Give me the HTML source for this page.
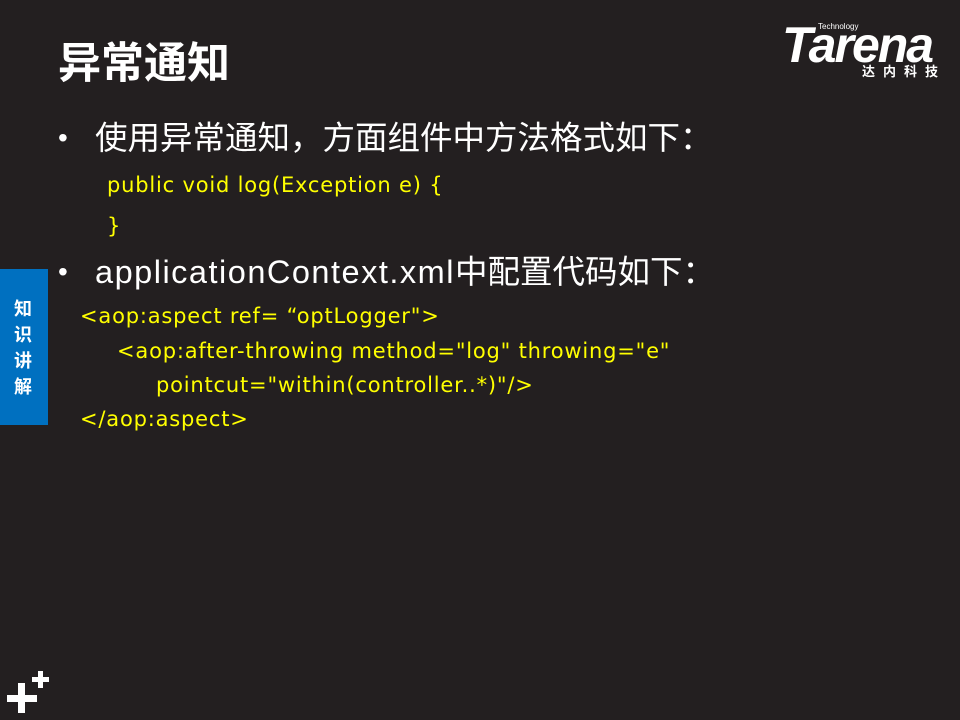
<!DOCTYPE html>
<html><head><meta charset="utf-8"><style>
body{margin:0;width:960px;height:720px;background:#231f20;position:relative;overflow:hidden;font-family:"Liberation Sans","Noto Sans CJK SC",sans-serif;color:#fff}
.a{position:absolute;white-space:nowrap}
.y{color:#ffff00;font-family:"DejaVu Sans",sans-serif;font-size:21px;line-height:30px;letter-spacing:0.8px}
</style></head><body>
<div class="a" style="left:58px;top:38px;font-size:43px;font-weight:bold;line-height:52px">异常通知</div>
<div class="a" style="left:782px;top:20px;font-size:50px;font-weight:bold;font-style:italic;letter-spacing:-2px;line-height:50px">Tarena</div>
<div class="a" style="left:818px;top:22px;font-size:8px;line-height:10px">Technology</div>
<div class="a" style="left:862px;top:64px;font-size:13px;font-weight:bold;letter-spacing:8px;line-height:16px">达内科技</div>
<div class="a" style="left:0;top:269px;width:48px;height:156px;background:#0070c0"></div>
<div class="a" style="left:14px;top:296px;font-size:18px;font-weight:bold;line-height:26px;width:20px;white-space:normal">知识讲解</div>
<div class="a" style="left:58px;top:118px;font-size:28px;line-height:40px">•</div>
<div class="a" style="left:95px;top:117px;font-size:32.5px;line-height:42px">使用异常通知，方面组件中方法格式如下：</div>
<div class="a y" style="left:107px;top:170px">public void log(Exception e) {</div>
<div class="a y" style="left:107px;top:211px">}</div>
<div class="a" style="left:58px;top:252px;font-size:28px;line-height:40px">•</div>
<div class="a" style="left:95px;top:251px;font-size:32.5px;line-height:42px"><span style="letter-spacing:1.5px">applicationContext.xml</span>中配置代码如下：</div>
<div class="a y" style="left:80px;top:301px">&lt;aop:aspect ref= “optLogger"&gt;</div>
<div class="a y" style="left:117px;top:336px">&lt;aop:after-throwing method="log" throwing="e"</div>
<div class="a y" style="left:156px;top:370px">pointcut="within(controller..*)"/&gt;</div>
<div class="a y" style="left:80px;top:404px">&lt;/aop:aspect&gt;</div>
<svg class="a" style="left:0;top:660px" width="60" height="60"><g fill="#fff"><rect x="18" y="23" width="7" height="30"/><rect x="7" y="35" width="30" height="7"/><rect x="38" y="11" width="5" height="17"/><rect x="32" y="17" width="17" height="5"/></g></svg>
</body></html>
